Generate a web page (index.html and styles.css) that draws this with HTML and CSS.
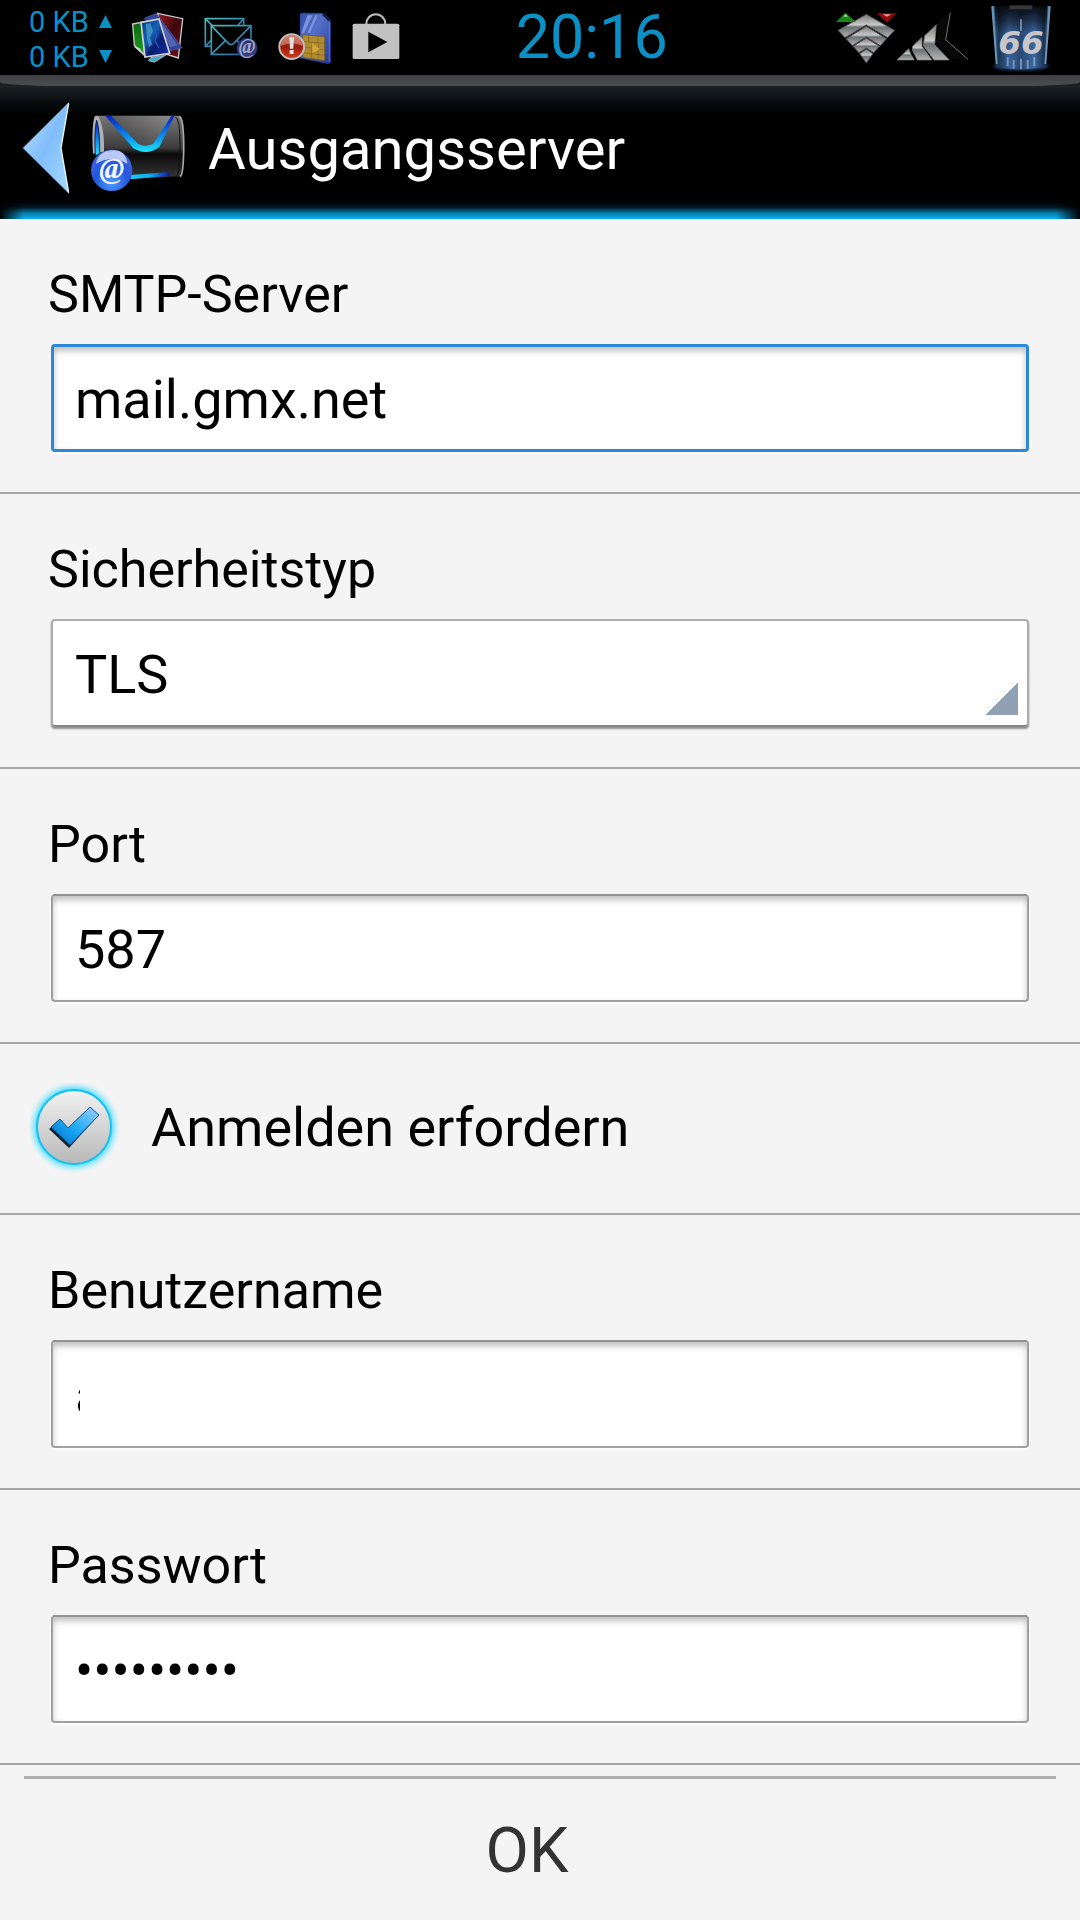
FILE: index.html
```html
<!DOCTYPE html>
<html lang="de">
<head>
<meta charset="utf-8">
<meta name="viewport" content="width=device-width, initial-scale=1">
<title>Ausgangsserver</title>
<link rel="stylesheet" href="styles.css">
</head>
<body>
<div class="statusbar">
  <div class="traffic">
    <div class="traffic-row">0 KB <svg class="tri" viewBox="0 0 12 12" aria-hidden="true"><path d="M6 0 12 12H0z"/></svg></div>
    <div class="traffic-row">0 KB <svg class="tri" viewBox="0 0 12 12" aria-hidden="true"><path d="M0 0H12L6 12z"/></svg></div>
  </div>
  <div class="notifications">
    <svg width="52" height="52" viewBox="399 34 156 156" aria-hidden="true">
      <defs>
        <linearGradient id="photoRed" x1="0" y1="0" x2="1" y2="1"><stop offset="0" stop-color="#a01820"/><stop offset=".5" stop-color="#3a080c"/><stop offset="1" stop-color="#7c1018"/></linearGradient>
        <linearGradient id="photoBlue" x1="0" y1="0" x2="1" y2="1"><stop offset="0" stop-color="#0a3c8c"/><stop offset=".4" stop-color="#1560b4"/><stop offset=".6" stop-color="#0a1c70"/><stop offset="1" stop-color="#1234b0"/></linearGradient>
        <linearGradient id="photoGreen" x1="0" y1="0" x2="0" y2="1"><stop offset="0" stop-color="#0c6410"/><stop offset="1" stop-color="#1ca020"/></linearGradient>
      </defs>
      <path d="M448 180 456 170 500 164 466 185z" fill="#48a8c8" stroke="#ccc" stroke-width="2"/>
      <path d="M476 38 551 54 538 172 500 160z" fill="url(#photoRed)" stroke="#c8c8c8" stroke-width="4"/>
      <path d="M436 52 472 38 550 142 508 152z" fill="#33449a" stroke="#7080c0" stroke-width="1"/>
      <path d="M482 58 536 134 512 140z" fill="#5263b4"/>
      <path d="M401 70 432 64 436 164 406 134z" fill="url(#photoGreen)" stroke="#c8c8c8" stroke-width="4"/>
      <path d="M404 138 422 142 438 166z" fill="#ccc"/>
      <path d="M426 65 480 55 512 158 438 169z" fill="url(#photoBlue)" stroke="#d0d0d0" stroke-width="5"/>
      <path d="M440 70 454 68 462 90 452 112 460 130 450 140 444 110z" fill="#48a0c4" opacity=".75"/>
      <path d="M466 72 474 100 468 120 480 142" fill="none" stroke="#2858b8" stroke-width="4"/>
    </svg>
    <svg width="54" height="52" viewBox="612 34 162 156" aria-hidden="true">
      <defs>
        <linearGradient id="mailLine" x1="0" y1="0" x2="1" y2="1"><stop offset="0" stop-color="#50b8b8"/><stop offset="1" stop-color="#1c5c9c"/></linearGradient>
        <linearGradient id="atBlue" x1="0" y1="0" x2="0" y2="1"><stop offset="0" stop-color="#22306c"/><stop offset="1" stop-color="#3a4284"/></linearGradient>
      </defs>
      <g fill="#000" stroke="url(#mailLine)" stroke-width="5">
        <path d="M616 54H731V137H616z"/>
        <path d="M616 54 640 78M618 136 634 118M731 54 714 74" fill="none"/>
        <path d="M634 75H753V161H634z"/>
        <path d="M634 75 685 128Q693 136 701 128L753 75M634 161 676 120M753 161 711 120" fill="none"/>
      </g>
      <circle cx="741" cy="142" r="31" fill="url(#atBlue)"/>
      <text x="741" y="156" class="at-small">@</text>
    </svg>
    <svg width="54" height="52" viewBox="830 42 162 156" aria-hidden="true">
      <defs>
        <linearGradient id="simBlue" x1="0" y1="0" x2="1" y2="1"><stop offset="0" stop-color="#304cac"/><stop offset=".4" stop-color="#5470c8"/><stop offset="1" stop-color="#2438a0"/></linearGradient>
        <linearGradient id="alertRed" x1="0" y1="0" x2="0" y2="1"><stop offset="0" stop-color="#c86050"/><stop offset=".5" stop-color="#981808"/><stop offset="1" stop-color="#d84020"/></linearGradient>
      </defs>
      <path d="M896 48 902 45 966 46 988 66V194L980 197 896 180z" fill="url(#simBlue)" stroke="#20307c" stroke-width="2"/>
      <path d="M966 46 988 66V76L980 68 962 50z" fill="#10184c"/>
      <path d="M984 68V192" stroke="#7086d8" stroke-width="2"/>
      <path d="M918 52H934L908 106H900zM942 52H950L926 104H918z" fill="#7b92d8"/>
      <path d="M904 110 970 116V188L904 178z" fill="#b18b30" stroke="#6c5418" stroke-width="2"/>
      <path d="M904 130 970 136M904 148 930 150M950 154 970 156M904 164 970 172M922 112V132M950 115V136M932 132 930 182M952 136 950 184" fill="none" stroke="#806420" stroke-width="2"/>
      <path d="M932 136 956 154 934 166z" fill="#d2a83c"/>
      <circle cx="871" cy="146" r="37" fill="url(#alertRed)" stroke="#c2bebc" stroke-width="6"/>
      <path d="M838 144A33 33 0 0 1 904 144Q871 128 838 144z" fill="#d89c90" opacity=".55"/>
      <path d="M864 118H878L876 152H866zM865 156H877V168H865z" fill="#dedede"/>
    </svg>
    <svg width="48" height="52" viewBox="1052 34 144 156" aria-hidden="true">
      <path d="M1095 74V70A28 29 0 0 1 1152 70V74" fill="none" stroke="#bdbdbd" stroke-width="6"/>
      <rect x="1054" y="69" width="140" height="106" rx="5" fill="#c1c1c1"/>
      <path d="M1101 93V155L1158 124z" fill="#000"/>
    </svg>
  </div>
  <div class="clock">20:16</div>
  <div class="signals">
    <svg width="60" height="54" viewBox="48 32 180 162" aria-hidden="true">
      <defs><linearGradient id="steel" x1="0" y1="0" x2="0" y2="1"><stop offset="0" stop-color="#777"/><stop offset=".45" stop-color="#c8c8c8"/><stop offset=".55" stop-color="#6a7173"/><stop offset="1" stop-color="#b4b4b4"/></linearGradient></defs>
      <g fill="url(#steel)" stroke="#4a4a4a" stroke-width="3">
        <path d="M139 42 224 90 203 112 139 74 75 112 54 90z"/>
        <path d="M139 78 200 115 181 136 139 110 97 136 78 115z"/>
        <path d="M139 113 179 138 161 157 139 143 117 157 99 138z"/>
        <path d="M139 146 159 160 139 188 119 160z"/>
      </g>
      <path d="M48 65 76 37 108 65z" fill="#178814"/><path d="M70 49 77 41 84 49z" fill="#a4d894"/>
      <path d="M171 39H228L201 67z" fill="#94090d"/><path d="M188 42H214L201 49z" fill="#e4a4a4"/>
    </svg>
    <svg width="74" height="54" viewBox="230 32 222 162" aria-hidden="true">
      <g fill="url(#steel)" stroke="#777" stroke-width="2">
        <path d="M233 179 268 145 274 160 285 179z"/>
        <path d="M280 138 308 111V138L338 179H294L279 150z"/>
        <path d="M316 106 351 73 346 133 390 179H344L312 136z"/>
      </g>
      <path d="M356 66 386 38 378 118 432 176H398L350 132z" fill="#080808"/>
      <path d="M393 37 379 118 446 177" fill="none" stroke="#777" stroke-width="3"/>
    </svg>
    <svg class="battery" width="66" height="72" viewBox="507 4 198 216" aria-hidden="true">
      <defs>
        <linearGradient id="glass"><stop offset="0" stop-color="#5683aa"/><stop offset=".12" stop-color="#1c3450"/><stop offset=".3" stop-color="#386298"/><stop offset=".5" stop-color="#2a4870"/><stop offset=".72" stop-color="#3a68a0"/><stop offset=".9" stop-color="#1c3450"/><stop offset="1" stop-color="#6d93b8"/></linearGradient>
        <linearGradient id="glassTop" x1="0" y1="0" x2="0" y2="1"><stop offset="0" stop-color="#000" stop-opacity=".9"/><stop offset=".25" stop-color="#000" stop-opacity=".5"/><stop offset=".5" stop-color="#000" stop-opacity="0"/></linearGradient>
        <filter id="soft"><feGaussianBlur stdDeviation="4"/></filter>
        <filter id="slight"><feGaussianBlur stdDeviation="2"/></filter>
      </defs>
      <ellipse cx="606" cy="196" rx="82" ry="13" fill="#234a80" filter="url(#soft)"/>
      <g filter="url(#slight)">
        <path d="M518 16 694 16 680 190Q676 204 606 206 536 204 532 190z" fill="url(#glass)"/>
        <path d="M526 14H686L678 180H536z" fill="url(#glassTop)"/>
        <path d="M572 14H640V26H572z" fill="#383838"/>
        <path d="M520 18 533 190M692 18 679 190" fill="none" stroke="#6a94ba" stroke-width="6"/>
        <path d="M606 56V90M566 170V196M584 178V204M606 174V206M626 178V204M646 170V196" stroke="#a3bcd6" stroke-width="6" opacity=".6"/>
      </g>
      <text x="606" y="159" class="battery-text">66</text>
    </svg>
  </div>
</div>

<header class="header">
  <div class="header-edge"></div>
  <div class="header-main">
    <a class="back" href="#" aria-label="Zurück">
      <svg width="48" height="94" viewBox="65 61 144 282" aria-hidden="true">
        <defs><linearGradient id="arrow" x1="0" y1="0" x2="1" y2="1"><stop offset="0" stop-color="#bfe3ff"/><stop offset=".5" stop-color="#80bdfa"/><stop offset="1" stop-color="#a7daff"/></linearGradient></defs>
        <path d="M67 202 206 64 182 202 206 339z" fill="url(#arrow)"/>
        <path d="M206 64 67 202 206 339" fill="none" stroke="#4c5c6c" stroke-width="3"/>
        <path d="M205 68 182 202 205 336" fill="none" stroke="#eef8ff" stroke-width="4"/>
      </svg>
      <svg width="96" height="78" viewBox="270 101 288 234" aria-hidden="true">
        <defs>
          <linearGradient id="envTop" x1="0" y1="1" x2="1" y2="0"><stop offset="0" stop-color="#333"/><stop offset="1" stop-color="#8a8a8a"/></linearGradient>
          <linearGradient id="envBody" x1="0" y1="0" x2="0" y2="1"><stop offset="0" stop-color="#777"/><stop offset=".5" stop-color="#3c3c3c"/><stop offset=".6" stop-color="#0a0a0a"/><stop offset="1" stop-color="#383838"/></linearGradient>
          <linearGradient id="flap" x1="0" y1="0" x2="0" y2="1"><stop offset="0" stop-color="#0820c8"/><stop offset=".6" stop-color="#0a94f0"/><stop offset="1" stop-color="#20e4f8"/></linearGradient>
          <linearGradient id="glowBase"><stop offset="0" stop-color="#18c8f8"/><stop offset=".5" stop-color="#10b0f0"/><stop offset="1" stop-color="#0818a8"/></linearGradient>
          <radialGradient id="ball" cx=".5" cy=".8" r=".8"><stop offset="0" stop-color="#4c9cff"/><stop offset=".5" stop-color="#2456dc"/><stop offset="1" stop-color="#4468e0"/></radialGradient>
        </defs>
        <path d="M290 106H540Q553 112 553 198T544 288L300 298z" fill="url(#envBody)"/>
        <path d="M334 107H516L470 192Q436 212 404 190z" fill="url(#envTop)"/>
        <path d="M316 107H334L414 190Q436 202 460 190L514 107H523L478 200Q440 228 400 204z" fill="url(#flap)"/>
        <path d="M538 109Q551 112 551 198T540 289" fill="none" stroke="#aaa" stroke-width="5"/>
        <path d="M526 110Q540 112 540 198T530 286" fill="none" stroke="#111" stroke-width="3"/>
        <path d="M284 108Q274 140 279 220L312 214Q314 140 294 106z" fill="#aeb0b4"/>
        <path d="M290 120Q282 150 286 226L299 220Q300 150 290 120z" fill="url(#flap)" stroke="#182050" stroke-width="3"/>
        <path d="M390 284 500 276Q510 278 508 287L392 297z" fill="url(#glowBase)"/>
        <circle cx="335" cy="270" r="62" fill="url(#ball)"/>
        <path d="M288 250Q294 214 335 210T382 250Q335 224 288 250z" fill="#d0dafc" opacity=".85"/>
        <text x="335" y="293" class="at-large">@</text>
      </svg>
    </a>
    <h1 class="title">Ausgangsserver</h1>
  </div>
</header>

<form class="form">
  <div class="field">
    <label for="smtp">SMTP-Server</label>
    <input class="box box-active" id="smtp" type="text" value="mail.gmx.net">
  </div>
  <div class="field">
    <label for="security">Sicherheitstyp</label>
    <select class="box" id="security"><option>TLS</option></select>
  </div>
  <div class="field">
    <label for="port">Port</label>
    <input class="box" id="port" type="text" value="587">
  </div>
  <div class="check">
    <input id="auth" type="checkbox" checked>
    <svg class="check-icon" viewBox="0 0 90 90" aria-hidden="true">
      <defs>
        <radialGradient id="halo"><stop offset=".8" stop-color="#35dcff" stop-opacity=".8"/><stop offset=".9" stop-color="#8fe6fb" stop-opacity=".45"/><stop offset="1" stop-color="#c8f0fa" stop-opacity="0"/></radialGradient>
        <linearGradient id="disc" x1="0" y1="0" x2="0" y2="1"><stop offset="0" stop-color="#f2f2f2"/><stop offset="1" stop-color="#b8b8b8"/></linearGradient>
        <linearGradient id="tick" x1="0" y1="1" x2="1" y2="0"><stop offset="0" stop-color="#0468c8"/><stop offset=".45" stop-color="#18a8f4"/><stop offset="1" stop-color="#9ad0ff"/></linearGradient>
      </defs>
      <circle cx="44" cy="44" r="47" fill="url(#halo)"/>
      <circle cx="44" cy="44" r="37" fill="url(#disc)" stroke="#12c2f2" stroke-width="2"/>
      <path d="M19 46 29 37 37 46 59 25 68 33 39 65z" fill="#123"/>
      <path d="M21 44 30 36 38 45 60 24 69 32 40 62z" fill="url(#tick)" stroke="#1c5890" stroke-width="1"/>
    </svg>
    <label for="auth">Anmelden erfordern</label>
  </div>
  <div class="field">
    <label for="user">Benutzername</label>
    <input class="box box-masked" id="user" type="text" value="a">
  </div>
  <div class="field">
    <label for="password">Passwort</label>
    <input class="box" id="password" type="password" value="123456789">
  </div>
  <div class="actions"><button class="ok" type="button">OK</button></div>
</form>
</body>
</html>
```
FILE: styles.css
```css
* {
  box-sizing: border-box;
}

body {
  margin: 0;
  min-height: 100vh;
  display: flex;
  flex-direction: column;
  background: #f4f4f4;
  color: #000;
  font-family: Roboto, sans-serif;
}

svg {
  display: block;
  flex: none;
}

/* Status bar */
.statusbar {
  display: flex;
  align-items: center;
  height: 75px;
  padding: 0 26px 0 29px;
  background: #000;
  color: #0b90c5;
}

.traffic {
  padding-top: 4px;
}

.traffic-row {
  display: flex;
  align-items: center;
  gap: 10px;
  font-size: 29px;
  line-height: 35px;
}

.tri {
  width: 13px;
  height: 13px;
  margin-bottom: 2px;
  fill: #0b90c5;
}

.notifications {
  display: flex;
  align-items: center;
  gap: 20px;
  margin-left: 20px;
}

.clock {
  margin-left: 116px;
  font-size: 61px;
  line-height: 75px;
}

.signals {
  display: flex;
  align-items: center;
  margin-left: auto;
}

.battery {
  margin-left: 18px;
}

.at-small,
.at-large {
  font-family: "Liberation Serif", serif;
  font-style: italic;
  font-weight: bold;
  text-anchor: middle;
}

.at-small {
  font-size: 60px;
  fill: #a0a4c8;
}

.at-large {
  font-size: 90px;
  fill: #f4f6ff;
}

.battery-text {
  font-family: "DejaVu Sans", sans-serif;
  font-size: 98px;
  font-weight: bold;
  font-style: italic;
  text-anchor: middle;
  fill: #c8c6ca;
}

/* Title bar */
.header {
  background: #1c1f22;
}

.header-edge {
  height: 11px;
  border-radius: 0 0 60px 60px / 0 0 4px 4px;
  background: linear-gradient(#404142, #4b4c4e);
}

.header-main {
  display: flex;
  align-items: center;
  gap: 22px;
  height: 133px;
  padding: 0 22px 10px;
  background:
    linear-gradient(90deg, #000, transparent 24px, transparent calc(100% - 24px), #000) bottom / 100% 100px no-repeat,
    linear-gradient(#1f2224, #050a0c 18px, #000 30px, #000 115px, #04141e 121px, #0878a8 127px, #08b4f4 133px);
}

.back {
  display: flex;
  align-items: center;
  gap: 20px;
}

.back svg:last-child {
  margin-top: 10px;
}

.title {
  margin: 0;
  padding-top: 3px;
  color: #fff;
  font-size: 58px;
  font-weight: 400;
  line-height: 68px;
}

/* Settings */
.form {
  flex: 1;
  display: flex;
  flex-direction: column;
}

.field {
  padding: 46px 51px 40px;
  border-bottom: 2px solid #a6a6a6;
}

.field label {
  display: block;
  margin: 0 -3px 19px;
  font-size: 52px;
  line-height: 60px;
}

.box {
  display: block;
  width: 100%;
  height: 108px;
  margin: 0;
  padding: 3px 22px 0;
  border: 2px solid #a0a0a0;
  border-top-color: #939393;
  border-radius: 4px;
  outline: 0;
  background: #fff;
  box-shadow: inset 0 4px 6px rgba(0, 0, 0, .25), 0 2px 1px #fcfcfc;
  color: #000;
  font: 54px/64px Roboto, sans-serif;
}

.box-active {
  padding: 3px 21px 0;
  border: 3px solid #2d89d8;
}

/* Only the first sliver of the value stays readable. */
.box-masked {
  padding-right: calc(100% - 31px);
}

select.box {
  appearance: none;
  border-color: #adadad;
  border-bottom-color: #858585;
  background: linear-gradient(to bottom right, transparent 50%, #91a1b4 50%) right 9px bottom 10px / 32px 32px no-repeat #fff;
  box-shadow: 0 2px 2px rgba(0, 0, 0, .4);
}

.check {
  position: relative;
  display: flex;
  align-items: center;
  gap: 31px;
  height: 171px;
  padding: 0 30px 2px;
  border-bottom: 2px solid #a6a6a6;
}

.check input {
  position: absolute;
  inset: 0;
  width: 100%;
  height: 100%;
  margin: 0;
  opacity: 0;
}

.check-icon {
  width: 90px;
  height: 90px;
}

.check label {
  font-size: 54px;
  line-height: 64px;
}

.actions {
  flex: 1;
  display: flex;
  margin: 11px 24px 0;
  border-top: 3px solid #b0b0b0;
}

.ok {
  flex: 1;
  padding: 2px 26px 0 0;
  border: 0;
  background: none;
  color: #333;
  font: 63px/74px Roboto, sans-serif;
}
```
